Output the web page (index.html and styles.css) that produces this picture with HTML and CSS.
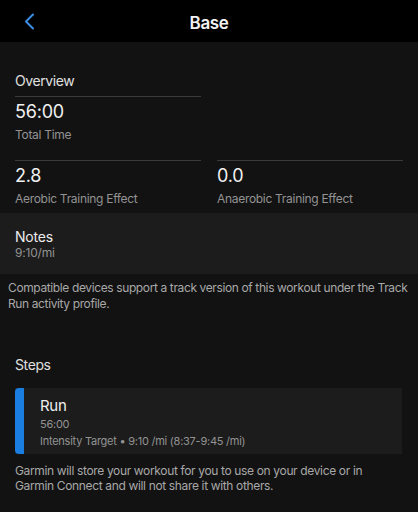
FILE: index.html
```html
<!DOCTYPE html>
<html>
<head>
<meta charset="utf-8">
<link rel="stylesheet" href="styles.css">
</head>
<body>
<header class="topbar">
  <div class="back">
    <svg width="11" height="17" viewBox="0 0 11 17"><path d="M9 1.5 L2 8.5 L9 15.5" fill="none" stroke="#3d8ee6" stroke-width="2" stroke-linecap="round" stroke-linejoin="round"/></svg>
  </div>
  <div class="title">Base</div>
  <div></div>
</header>

<section class="overview">
  <div class="section-title">Overview</div>
  <div class="stats">
    <div class="stat">
      <div class="value">56:00</div>
      <div class="label">Total Time</div>
    </div>
    <div class="spacer"></div>
    <div class="stat">
      <div class="value">2.8</div>
      <div class="label">Aerobic Training Effect</div>
    </div>
    <div class="stat">
      <div class="value">0.0</div>
      <div class="label">Anaerobic Training Effect</div>
    </div>
  </div>
</section>

<section class="notes">
  <div class="notes-title">Notes</div>
  <div class="notes-text">9:10/mi</div>
</section>

<p class="info">Compatible devices support a track version of this workout under the Track Run activity profile.</p>

<section class="steps">
  <div class="section-title">Steps</div>
  <div class="step-card">
    <div class="step-bar"></div>
    <div class="step-body">
      <div class="step-name">Run</div>
      <div class="step-meta">56:00</div>
      <div class="step-meta">Intensity Target • 9:10 /mi (8:37-9:45 /mi)</div>
    </div>
  </div>
  <p class="footer-text">Garmin will store your workout for you to use on your device or in Garmin Connect and will not share it with others.</p>
</section>
</body>
</html>
```

FILE: styles.css
```css
html, body {
  margin: 0;
  padding: 0;
  background: #121212;
  font-family: Inter, "Open Sans", sans-serif;
  color: #ececec;
}

.topbar {
  height: 42px;
  background: #000;
  display: grid;
  grid-template-columns: 1fr auto 1fr;
  align-items: center;
}

.back {
  padding-left: 24px;
  display: flex;
  align-items: center;
  height: 42px;
  padding-top: 1px;
  box-sizing: border-box;
}

.title {
  font-size: 17px;
  font-weight: 600;
  letter-spacing: -0.4px;
  color: #f2f2f2;
  padding-top: 3px;
}

.overview {
  padding: 30px 16px 7px 15px;
}

.section-title {
  font-size: 14px;
  line-height: 17px;
  letter-spacing: -0.4px;
  color: #e0e0e0;
}

.stats {
  margin-top: 7px;
  display: grid;
  grid-template-columns: 186px 186px;
  column-gap: 16px;
  row-gap: 18px;
}

.stat {
  border-top: 1px solid #3a3a3a;
  padding-top: 4px;
}

.value {
  font-size: 18px;
  line-height: 22px;
  letter-spacing: -0.2px;
  color: #f0f0f0;
}

.label {
  margin-top: 4px;
  font-size: 12px;
  line-height: 15px;
  letter-spacing: -0.3px;
  color: #939393;
}

.notes {
  background: #1c1c1c;
  padding: 16px 15px 14px;
}

.notes-title {
  font-size: 14px;
  line-height: 16px;
  letter-spacing: -0.2px;
  color: #ececec;
}

.notes-text {
  font-size: 12px;
  line-height: 15px;
  letter-spacing: -0.2px;
  color: #939393;
}

.info {
  margin: 0;
  padding: 6px 6px 0 8px;
  font-size: 12px;
  line-height: 15.5px;
  letter-spacing: -0.38px;
  color: #a8a8a8;
}

.steps {
  padding: 45px 16px 0 15px;
}

.step-card {
  margin-top: 15px;
  display: flex;
  background: #1c1c1c;
  height: 66px;
}

.step-bar {
  width: 9px;
  background: #1a7de0;
  border-radius: 4px 0 0 4px;
}

.step-body {
  padding: 9px 0 0 16px;
}

.step-name {
  font-size: 15px;
  line-height: 18px;
  letter-spacing: -0.3px;
  color: #f0f0f0;
}

.step-meta {
  font-size: 11px;
  line-height: 16.5px;
  letter-spacing: -0.25px;
  color: #939393;
  margin-top: 0.5px;
}

.footer-text {
  margin: 0;
  padding-top: 9px;
  font-size: 12px;
  line-height: 15px;
  letter-spacing: -0.35px;
  color: #a8a8a8;
}
```
